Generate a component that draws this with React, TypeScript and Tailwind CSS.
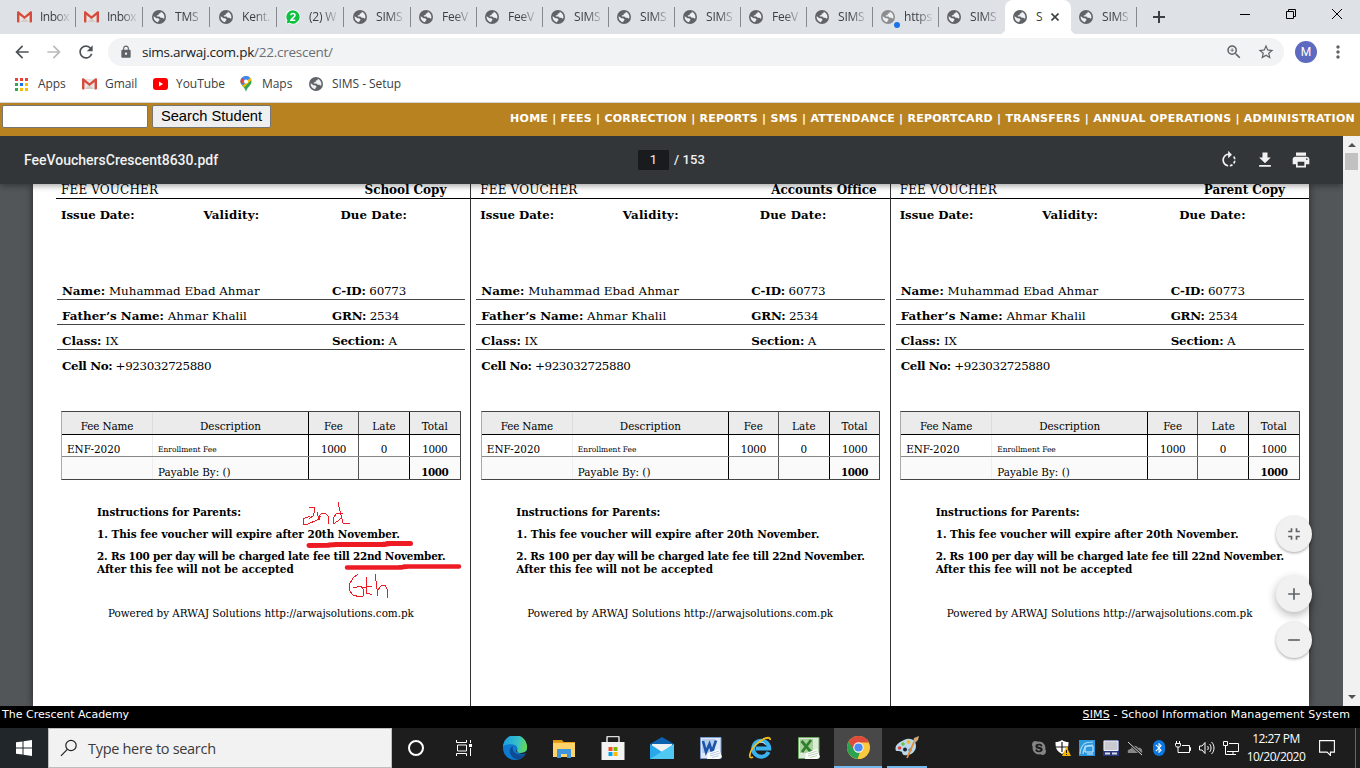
import type { ReactNode } from 'react';
import { MdArrowBack, MdArrowForward, MdRefresh, MdLock, MdZoomIn, MdStarBorder, MdMoreVert, MdAdd, MdRotateRight, MdFileDownload, MdPrint, MdFullscreenExit, MdRemove, MdBluetooth } from 'react-icons/md';
import { FaSkype } from 'react-icons/fa';

const serif = "font-['DejaVu_Serif',serif]";

function GmailIcon() {
  return (
    <svg viewBox="0 0 15 12" className="h-3 w-[15px] shrink-0">
      <path d="M1 1h13v10H1z" fill="#e8e4e2" />
      <path d="M3 11L7.5 7 12 11z" fill="#d3cdca" />
      <path d="M0 1.2C0 .3 1.2-.1 1.9.5L7.500 5.200 13.100.5C13.800-.1 15 .3 15 1.200V10.500a1 1 0 0 1-1 1h-1.400V4L7.500 8 2.400 4v7.500H1a1 1 0 0 1-1-1z" fill="#d54b3d" />
    </svg>
  );
}

function WhatsAppIcon() {
  return (
    <svg viewBox="0 0 16 16" className="size-4 shrink-0">
      <path d="M8 .5a7.500 7.500 0 1 1-3.600 14.100L.5 15.600l1-3.800A7.500 7.500 0 0 1 8 .5z" fill="#fff" />
      <path d="M8 1.300a6.700 6.700 0 1 1-3.400 12.500l-3 .8.800-3A6.700 6.700 0 0 1 8 1.300z" fill="#0fc143" />
      <path d="M5.800 6.200C6 4 10 4 10 6.300 10 8 6.500 9.500 5.900 11.300H10.300" fill="none" stroke="#fff" strokeWidth="1.500" />
    </svg>
  );
}

function Globe({ light = false }: { light?: boolean }) {
  return (
    <svg viewBox="0 0 14 14" className="size-[14px] shrink-0">
      <circle cx="7" cy="7" r="7" fill={light ? '#8a8d90' : '#5f6368'} />
      <path d="M8.600 1.700c2.200.7 3.800 2.800 3.800 5.300 0 .6-.1 1.100-.3 1.700-.7-.5-1.400-.4-1.800-1H8.800C8 7.700 8 6.500 7.200 6.500H4.800V5.200h1.300c.5 0 .6-.3.6-.7V3.400h1c.7 0 1.200-.5.9-1.700z" fill="#eef0f2" />
      <path d="M1.700 6.300L4.500 8.300h1.700l1.300 1.200c0 .9-.5 1.200-1.200 1.600v1.200C3.700 12 1.600 9.800 1.600 7z" fill="#eef0f2" />
    </svg>
  );
}

type TabInfo = { title: string; icon?: 'gmail' | 'wa' | 'busy'; active?: boolean; noLine?: boolean };

const tabs: TabInfo[] = [
  { title: 'Inbox', icon: 'gmail' },
  { title: 'Inbox', icon: 'gmail' },
  { title: 'TMS' },
  { title: 'Kent.' },
  { title: '(2) W', icon: 'wa' },
  { title: 'SIMS' },
  { title: 'FeeV' },
  { title: 'FeeV' },
  { title: 'SIMS' },
  { title: 'SIMS' },
  { title: 'SIMS' },
  { title: 'FeeV' },
  { title: 'SIMS' },
  { title: 'https', icon: 'busy' },
  { title: 'SIMS', noLine: true },
  { title: 'S', active: true, noLine: true },
  { title: 'SIMS' },
];

function Tab({ tab, wide }: { tab: TabInfo; wide: boolean }) {
  return (
    <div className={'relative flex h-full shrink-0 items-center ' + (wide ? 'w-[67px] pl-2 ' : 'w-[66px] pl-[7px] ') + (tab.active ? 'rounded-t-lg bg-white' : '')}>
      <div className="relative flex w-[15px] shrink-0 justify-center">
        {tab.icon === 'gmail' ? <GmailIcon /> : tab.icon === 'wa' ? <WhatsAppIcon /> : <Globe light={tab.icon === 'busy'} />}
        {tab.icon === 'busy' && <span className="absolute -right-[5px] -bottom-1 size-1.5 rounded-full bg-[#1a73e8]" />}
      </div>
      {tab.active ? (
        <>
          <span className="ml-[9px]">{tab.title}</span>
          <svg viewBox="0 0 8 8" className="ml-2 size-2" fill="none" stroke="#3c4043" strokeWidth="1.600"><path d="M.5.5l7 7M7.500.5l-7 7" /></svg>
          <span className="absolute bottom-0 -left-1.5 h-1.5 w-1.5 bg-[radial-gradient(circle_at_0_0,transparent_6px,white_6.500px)]" />
          <span className="absolute -right-1.5 bottom-0 h-1.5 w-1.5 bg-[radial-gradient(circle_at_100%_0,transparent_6px,white_6.500px)]" />
        </>
      ) : (
        <span className={'overflow-hidden whitespace-nowrap [mask-image:linear-gradient(to_right,black_45%,rgba(0,0,0,0.2)_27px)] ' + (tab.icon === 'gmail' ? 'ml-2 w-[34px] tracking-[-0.500px]' : 'ml-[9px] w-7 tracking-[-0.2px]')}>{tab.title}</span>
      )}
      {!tab.noLine && <span className="absolute top-[7px] right-0 h-5 w-px bg-[#85888c]" />}
    </div>
  );
}

function BrowserChrome() {
  return (
    <div className="font-['Open_Sans',sans-serif] text-[12px] text-[#3c4043]">
      <div className="flex h-[34px] bg-[#dee1e6] pl-[9px]">
        <div className="flex w-[1128px]">
          {tabs.map((t, i) => <Tab key={i} tab={t} wide={i < 6} />)}
        </div>
        <div className="flex w-11 items-center justify-center">
          <svg viewBox="0 0 12 12" className="size-3" fill="none" stroke="#3c4043" strokeWidth="2"><path d="M6 0v12M0 6h12" /></svg>
        </div>
        <svg viewBox="0 0 120 34" className="ml-auto h-[34px] w-[120px]" fill="none" stroke="#000" strokeWidth="1">
          <path d="M0 14.500h10M46.500 11.500h7v7h-7zM48.500 11.500v-2h7v7h-2M92 9l10 10M102 9l-10 10" />
        </svg>
      </div>
      <div className="flex h-9 items-center bg-white">
        <MdArrowBack className="ml-3 size-5 text-[#4f5357]" />
        <MdArrowForward className="ml-3 size-5 text-[#b9bbbd]" />
        <MdRefresh className="ml-3 size-5 text-[#4f5357]" />
        <div className="ml-[12px] flex h-7 w-[1176px] items-center rounded-full bg-[#f1f3f4] pl-[11px]">
          <MdLock className="size-[14px] text-[#5f6368]" />
          <span className="ml-[9px] text-[13.500px] leading-5 tracking-[-0.250px] text-[#202124]">sims.arwaj.com.pk<span className="text-[#6b6f74]">/22.crescent/</span></span>
          <MdZoomIn className="mr-[14px] ml-auto size-[18px] text-[#5f6368]" />
          <MdStarBorder className="mr-[9px] size-[18px] text-[#5f6368]" />
        </div>
        <div className="ml-[11px] flex size-[22px] items-center justify-center rounded-full bg-[#5c6bc0] font-[Roboto,sans-serif] text-[12px] text-white">M</div>
        <MdMoreVert className="ml-[11px] size-5 text-[#5f6368]" />
      </div>
      <div className="flex h-[33px] items-center border-b border-[#d3d6d9] bg-white pb-1 pl-[15px] text-[12px] tracking-[-0.050px]">
        <div className="grid grid-cols-3 gap-[2px]">
          <i className="size-[3px] bg-[#ea4335]" /><i className="size-[3px] bg-[#ea4335]" /><i className="size-[3px] bg-[#ea4335]" />
          <i className="size-[3px] bg-[#34a853]" /><i className="size-[3px] bg-[#1a73e8]" /><i className="size-[3px] bg-[#fbbc04]" />
          <i className="size-[3px] bg-[#34a853]" /><i className="size-[3px] bg-[#fbbc04]" /><i className="size-[3px] bg-[#fbbc04]" />
        </div>
        <span className="ml-[10px] w-[44px]">Apps</span>
        <GmailIcon />
        <span className="ml-2 w-[48px]">Gmail</span>
        <svg viewBox="0 0 15 12" className="h-3 w-[15px]"><rect width="15" height="12" rx="3" fill="#f00" /><path d="M6 3.500v5L10 6z" fill="#fff" /></svg>
        <span className="ml-2 w-[64px]">YouTube</span>
        <svg viewBox="0 0 12 16" className="h-4 w-3">
          <path d="M6 0a5.500 5.500 0 0 1 5.500 5.500C11.500 9.500 7 11 6 16 5 11 .5 9.500.5 5.500A5.500 5.500 0 0 1 6 0z" fill="#34a853" />
          <path d="M.5 5.500C.5 8.500 2.500 9.800 4 11.500L11.300 4C11 2 9.500.7 8.500.4z" fill="#fbbc04" />
          <path d="M6 0C7.500 0 9 .5 10 1.700L3.200 9.600C1.600 8.300.5 7 .5 5.500A5.500 5.500 0 0 1 6 0z" fill="#4285f4" />
          <path d="M1.700 2.100L4.700 4.800 1.600 8.200A5.500 5.500 0 0 1 1.700 2.100z" fill="#ea4335" />
          <circle cx="6" cy="5.500" r="2.100" fill="#fff" />
        </svg>
        <span className="ml-[10px] w-[47px]">Maps</span>
        <Globe />
        <span className="ml-[9px]">SIMS - Setup</span>
      </div>
    </div>
  );
}

function SiteHeader() {
  return (
    <div className="flex h-[33px] items-start bg-[#b98221]">
      <div className="mt-[2px] ml-[2px] h-[23px] w-[146px] rounded-[2px] border border-[#767676] bg-white" />
      <button className="mt-[2px] ml-1 h-[23px] w-[119px] rounded-[2px] border border-[#767676] bg-[#efefef] pb-px font-['Liberation_Sans',sans-serif] text-[14.700px] leading-5 text-black">Search Student</button>
      <nav className="mt-2 mr-[5px] ml-auto font-['DejaVu_Sans',sans-serif] text-[11px] leading-4 font-bold tracking-[0.250px] whitespace-nowrap text-white">
        HOME | FEES | CORRECTION | REPORTS | SMS | ATTENDANCE | REPORTCARD | TRANSFERS | ANNUAL OPERATIONS | ADMINISTRATION
      </nav>
    </div>
  );
}

function PdfToolbar() {
  return (
    <div className="relative z-10 flex h-12 shrink-0 items-center bg-[#323639] font-[Roboto,sans-serif] text-[#f1f1f1] shadow-[0_2px_6px_rgba(0,0,0,0.35)]">
      <span className="w-[638px] pl-6 text-[14px] font-medium">FeeVouchersCrescent8630.pdf</span>
      <span className="flex h-5 w-[31px] items-center justify-center bg-[#191b1c] text-[13px]">1</span>
      <span className="ml-[5px] text-[13px] font-medium tracking-[0.1px]">/ 153</span>
      <MdRotateRight className="ml-auto size-5" />
      <MdFileDownload className="ml-[16px] size-5" />
      <MdPrint className="mr-[32px] ml-4 size-5" />
    </div>
  );
}

function Detail({ a, av, b, bv, last = false }: { a: string; av: string; b?: string; bv?: string; last?: boolean }) {
  return (
    <div className={last ? 'flex h-[25px] pt-2 pl-[5px] leading-4' : 'flex h-[25px] border-b border-[#444] pt-2 pl-[5px] leading-4'}>
      <span className={last ? 'w-[270px] tracking-[-0.400px]' : 'w-[270px]'}><b>{a}</b> {av}</span>
      {b && <span className="tracking-[-0.200px]"><b>{b}</b> {bv}</span>}
    </div>
  );
}

function Cell({ children, className }: { children?: ReactNode; className: string }) {
  return <div className={'leading-4 ' + className}>{children}</div>;
}

function Voucher({ copy, pad, first = false }: { copy: string; pad: string; first?: boolean }) {
  return (
    <div className={first ? 'min-w-0 pl-px' : 'min-w-0 border-l border-[#333]'}>
      <div className={'flex h-[15px] justify-between border-b border-black text-[12px] leading-[13px] ' + pad}>
        <span className="tracking-[0.150px]">FEE VOUCHER</span><b className="tracking-[-0.050px]">{copy}</b>
      </div>
      <div className="flex h-[76px] pt-2 pl-[9px] text-[11.800px] leading-4 font-bold">
        <span className="w-[142.500px] tracking-[-0.050px]">Issue Date:</span><span className="w-[137px] tracking-[0.200px]">Validity:</span><span className="tracking-[0.100px]">Due Date:</span>
      </div>
      <div className="mr-[5px] ml-[5px] text-[11.900px]">
        <Detail a="Name:" av="Muhammad Ebad Ahmar" b="C-ID:" bv="60773" />
        <Detail a="Father’s Name:" av="Ahmar Khalil" b="GRN:" bv="2534" />
        <Detail a="Class:" av="IX" b="Section:" bv="A" />
        <Detail a="Cell No:" av="+923032725880" last />
      </div>
      <div className={'mt-9 h-[69px] w-[399.500px] border border-[#444] border-l-[#aaa] text-[10.400px] ' + (first ? 'ml-[9px]' : 'ml-[9.500px]')}>
        <div className="flex h-[23px] border-b border-black bg-[#ebebeb] text-center">
          <Cell className="w-[91px] border-r border-[#ddd] pt-1.5 tracking-[-0.150px]">Fee Name</Cell>
          <Cell className="w-[156px] border-r border-black pt-1.5">Description</Cell>
          <Cell className="w-[50px] border-r border-[#555] pt-1.5">Fee</Cell>
          <Cell className="w-[51px] border-r border-black pt-1.5">Late</Cell>
          <Cell className="flex-1 pt-1.5">Total</Cell>
        </div>
        <div className="flex h-[22px] border-b border-[#888] text-center">
          <Cell className="w-[91px] border-r border-[#eee] pt-1.5 pl-[5px] text-left">ENF-2020</Cell>
          <Cell className="w-[156px] border-r border-black pt-[7px] pl-[5px] text-left text-[7.500px]">Enrollment Fee</Cell>
          <Cell className="w-[50px] border-r border-[#555] pt-1.5 tracking-[-0.300px]">1000</Cell>
          <Cell className="w-[51px] border-r border-black pt-1.5">0</Cell>
          <Cell className="flex-1 pt-1.5 tracking-[-0.300px]">1000</Cell>
        </div>
        <div className="flex h-[22px] bg-[#fafafa] text-center">
          <Cell className="w-[91px] border-r border-[#eee]" />
          <Cell className="w-[156px] border-r border-black pt-[7px] pl-[5px] text-left">Payable By: ()</Cell>
          <Cell className="w-[50px] border-r border-[#555]" />
          <Cell className="w-[51px] border-r border-black" />
          <Cell className="flex-1 pt-[7px] font-bold tracking-[-0.500px]">1000</Cell>
        </div>
      </div>
      <div className="mt-[26px] pl-[45px] text-[10.400px] leading-[13px] font-bold whitespace-nowrap">
        <p>Instructions for Parents:</p>
        <p className="mt-[9px]">1. This fee voucher will expire after 20th November.</p>
        <p className="mt-[9px] tracking-[-0.180px]">2. Rs 100 per day will be charged late fee till 22nd November.</p>
        <p>After this fee will not be accepted</p>
      </div>
      <p className="mt-[31px] pl-[56px] text-[10.400px] leading-[13px] tracking-[-0.040px] whitespace-nowrap">Powered by ARWAJ Solutions http://arwajsolutions.com.pk</p>
    </div>
  );
}

function Annotations() {
  return (
    <svg viewBox="0 0 170 110" className="absolute top-[360px] left-[295px] h-[110px] w-[170px]" fill="none" stroke="#ed1c24" strokeLinecap="round" strokeLinejoin="round">
      <path strokeWidth="1" shapeRendering="crispEdges" d="M14 11h5l1 3-2 6-4 3M15 20l-7 3v5h5l9-4 4-4M22 16l2 8v-4l3-3h3l3 3 1 8M48 17h-6l-4 5v6l5-3 3-3M43 6l2 9 3 12 7 1" />
      <path strokeWidth="5" d="M14 49.500l20-.2M40 48.500h50M92 47.500h23.500M34 49l8-.5M88 48.200l6-.5" />
      <path strokeWidth="4.500" d="M52 71.500h55M109 70.500h55M104 71.300l8-.6" />
      <path strokeWidth="1" shapeRendering="crispEdges" d="M63 78l-5 4-4 7v5l4 5 7 2 3-1v-7l-2-3-8 2M71 81v16l4 1h2M67 92l10-2M80 78l3 22M83 94l3-4 4-1 2 4 1 9" />
    </svg>
  );
}

function Fab({ children, lifted = false }: { children: ReactNode; lifted?: boolean }) {
  return <div className={lifted ? 'flex size-9 items-center justify-center rounded-full bg-[#f1f1f1] text-[#5f6368] shadow-[0_3px_10px_rgba(0,0,0,0.3)]' : 'flex size-9 items-center justify-center rounded-full bg-[#f1f1f1] text-[#5f6368] shadow-[0_1px_3px_rgba(0,0,0,0.35)]'}>{children}</div>;
}

function PdfViewer() {
  return (
    <div className="flex h-[570px]">
      <div className="relative flex w-[1343px] flex-col overflow-hidden bg-[#525659]">
        <PdfToolbar />
        <div className={'ml-[33px] grid w-[1276px] flex-1 grid-cols-3 bg-white pl-[18px] text-black shadow-[0_0_8px_rgba(0,0,0,0.55)] ' + serif}>
          <Voucher copy="School Copy" pad="ml-1 pr-6 pl-[5px]" first />
          <Voucher copy="Accounts Office" pad="pr-[13px] pl-[9px]" />
          <Voucher copy="Parent Copy" pad="pr-6 pl-[9px]" />
        </div>
        <Annotations />
        <div className="absolute top-[380px] right-[31px] flex flex-col">
          <Fab><MdFullscreenExit className="size-5" /></Fab>
          <div className="mt-6"><Fab lifted><MdAdd className="size-5" /></Fab></div>
          <div className="mt-[10px]"><Fab><MdRemove className="size-5" /></Fab></div>
        </div>
      </div>
      <div className="flex w-[17px] flex-col items-center justify-between bg-[#f1f1f1] pb-[7px]">
        <div className="flex flex-col items-center pt-[7px]">
          <svg viewBox="0 0 8 4" className="h-1 w-2"><path d="M0 4L4 0l4 4z" fill="#505050" /></svg>
          <div className="mt-[6px] h-[17px] w-[13px] bg-[#c1c1c1]" />
        </div>
        <svg viewBox="0 0 8 4" className="h-1 w-2"><path d="M0 0l4 4 4-4z" fill="#505050" /></svg>
      </div>
    </div>
  );
}

function TaskIcon({ children }: { children: ReactNode }) {
  return <div className="flex h-full w-[49px] items-center justify-center">{children}</div>;
}

function Doc({ kind }: { kind: 'word' | 'excel' }) {
  const w = kind === 'word';
  return (
    <svg viewBox="0 0 22 22" className="size-[22px]">
      <path d="M.5 .5h20.500v21H.5z" fill={w ? '#dfe8f6' : '#dcebd8'} stroke={w ? '#7b9bd0' : '#6fa765'} />
      <path d="M2 2h13v14H2z" fill={w ? '#b8cdec' : '#a8cf9c'} />
      {w ? <path d="M3 4l3 11 3.500-8 2.500 8L16 3.500" fill="none" stroke="#1c55a8" strokeWidth="2.600" /> : <path d="M3.500 4L13 15M13 3L4 15" fill="none" stroke="#2f7f2c" strokeWidth="2.800" />}
      <path d="M8 16l11-4 3 8-3 2H7z" fill="#fff" />
      <path d="M10 17l9-3M10 19l10-3M12 20.500l7-2" stroke={w ? '#9bb3d8' : '#9cc494'} strokeWidth=".7" />
    </svg>
  );
}

function Taskbar() {
  return (
    <div className="flex h-10 bg-[#1d1d1d] font-['Open_Sans',sans-serif] text-white">
      <div className="flex w-12 items-center justify-center bg-[#20262a]">
        <svg viewBox="0 0 16 16" className="size-4" fill="#fff"><path d="M0 2.300L6.500 1.400V7.500H0zM7.500 1.200L16 0v7.500H7.500zM0 8.500h6.500v6.100L0 13.700zM7.500 8.500H16V16l-8.500-1.200z" /></svg>
      </div>
      <div className="flex w-[344px] items-center border border-[#bdbdbd] bg-[#f2f2f2] pl-[11px]">
        <svg viewBox="0 0 18 18" className="size-[18px]" fill="none" stroke="#222" strokeWidth="1.200"><circle cx="11" cy="6.500" r="5.200" /><path d="M7.300 10.300L1 16.800" /></svg>
        <span className="ml-[10px] pt-px text-[14.500px] tracking-[-0.300px] text-[#3b3b3b]">Type here to search</span>
      </div>
      <div className="flex w-12 items-center justify-center"><span className="size-4 rounded-full border-2 border-white" /></div>
      <div className="flex w-[50px] items-center justify-center pr-[3px]">
        <svg viewBox="0 0 16 16" className="size-4" fill="none" stroke="#fff"><path d="M.5 0v2.500h10V0M1.500 5h9v6h-9zM.5 16v-2.500h10V16M14.500 0v3M14.500 8v8" /><path d="M13 4h3v3h-3z" fill="#fff" stroke="none" /></svg>
      </div>
      <TaskIcon>
        <svg viewBox="0 0 24 24" className="size-6">
          <defs><linearGradient id="eg" x1="0" x2="1" y1="0.300" y2="0.500"><stop stopColor="#1b9de2" /><stop offset=".6" stopColor="#35c1c8" /><stop offset="1" stopColor="#66d84f" /></linearGradient></defs>
          <circle cx="12" cy="12" r="12" fill="#0d79d1" />
          <path d="M0 11A12 12 0 0 1 24 11c.3 4.500-3 6-6 6-3 0-5-1-4-2.500C15.500 12.500 14 8.500 9.500 8.500 5 8 1 9 0 11z" fill="url(#eg)" />
          <path d="M8 11.500C5 15 8 22.500 14 23.500c4-.5 7-3 8.500-6-2 1-5 1.500-8 .5-3-1-6-3.500-4.500-8z" fill="#0d4c94" />
          <path d="M13.500 13.500c-1 1.500 0 3.500 4.500 3.500 2.500 0 4.500-1 5.500-2.500v2.500c-4 2-9 1.500-10-3.500z" fill="#1d1d1d" />
        </svg>
      </TaskIcon>
      <TaskIcon>
        <svg viewBox="0 0 22 19" className="h-[19px] w-[22px]"><path d="M0 1h9l1.500 2H22v15H0z" fill="#e9a21a" /><path d="M0 4h22v14H0z" fill="#fdd36a" /><path d="M4 10h14v9h-4v-4H8v4H4z" fill="#3f96dd" /><path d="M0 1h9v1.500H0z" fill="#d9920a" /></svg>
      </TaskIcon>
      <TaskIcon>
        <svg viewBox="0 0 24 24" className="size-6"><path d="M6 7V1.500a1 1 0 0 1 1-1h10a1 1 0 0 1 1 1V7" fill="none" stroke="#ddd" strokeWidth="1.500" /><path d="M.5 6h23v18H.5z" fill="#f3f3f3" /><path d="M7.500 11h4v4h-4z" fill="#f25022" /><path d="M12.500 11h4v4h-4z" fill="#7fba00" /><path d="M7.500 16h4v4h-4z" fill="#00a4ef" /><path d="M12.500 16h4v4h-4z" fill="#ffb900" /></svg>
      </TaskIcon>
      <TaskIcon>
        <svg viewBox="0 0 24 22" className="h-[22px] w-6"><path d="M0 7L12 0l12 7v15H0z" fill="#0b62ae" /><path d="M2 7h20v8l-10 4L2 15z" fill="#eef2f5" /><path d="M0 7l12 8 12-8v15H0z" fill="#28a8ea" /><path d="M0 22L24 7v15z" fill="#50c8f4" /></svg>
      </TaskIcon>
      <TaskIcon><Doc kind="word" /></TaskIcon>
      <TaskIcon>
        <svg viewBox="0 0 24 24" className="size-6" fill="none">
          <path d="M20.500 16a8 8 0 1 1 .7-3.500H8" stroke="#3ab3ee" strokeWidth="4" />
          <path d="M17.500 8.500A6 6 0 0 0 7 10" stroke="#b4e6fb" strokeWidth="1" />
          <path d="M5 21C0 24 1 16 7 9.500 13 3 23-1 22 4" stroke="#f1bc1c" strokeWidth="1.800" />
        </svg>
      </TaskIcon>
      <TaskIcon><Doc kind="excel" /></TaskIcon>
      <div className="ml-px flex w-12 items-center justify-center border-b-2 border-[#76b9ed] bg-[#484848]">
        <svg viewBox="0 0 24 24" className="mt-px size-[23px]">
          <circle cx="12" cy="12" r="12" fill="#fbc93d" />
          <path d="M1.600 6A12 12 0 0 1 22.400 6L22.800 6.800H12A5.200 5.200 0 0 0 7 10.500L6.800 14.600z" fill="#de4a3c" />
          <path d="M1.600 6L7.500 14.600A5.200 5.200 0 0 0 13.500 17L11 24A12 12 0 0 1 1.600 6z" fill="#2aa24f" />
          <circle cx="12" cy="12" r="5.400" fill="#f4f4f4" /><circle cx="12" cy="12" r="4.300" fill="#4c8bf5" />
        </svg>
      </div>
      <div className="ml-[5px] flex w-10 items-center justify-center border-b-2 border-[#76b9ed]">
        <svg viewBox="0 0 24 24" className="size-6">
          <path d="M9 5c6-3 12 0 12 6 0 7-7 10-12 9-2 0-1-3-3-3.500C3 16 0 17 .5 13 1 9 5 7 9 5z" fill="#b9d9ea" />
          <circle cx="10" cy="14.500" r="2" fill="#222" /><circle cx="4.500" cy="13" r="1.800" fill="#e2453b" /><circle cx="8" cy="9" r="1.800" fill="#6cc046" /><circle cx="13.500" cy="7" r="2" fill="#f2b92f" /><circle cx="15" cy="15" r="1.800" fill="#4d88d8" />
          <path d="M12 23l7-16" stroke="#e58a2e" strokeWidth="1.800" /><path d="M18 7l1-4 5-2-1 4-3 3z" fill="#cfa77c" />
        </svg>
      </div>
      <div className="ml-auto flex items-center gap-2">
        <FaSkype className="size-4 text-[#858585]" />
        <svg viewBox="0 0 16 16" className="size-4"><path d="M7 0c2 1.500 4 2 6.500 2 0 6-1 9-6.500 12C1.500 11 .5 8 .5 2 3 2 5 1.500 7 0z" fill="#fff" /><path d="M7 2v10M1 7h12" stroke="#1d1d1d" strokeWidth="1.200" /><path d="M11.500 6.500L16 16H7z" fill="#f7b500" /><path d="M11.500 10v3M11.500 14v1" stroke="#222" /></svg>
        <svg viewBox="0 0 16 16" className="size-4"><path d="M0 0h16v16H0z" fill="#2b97dd" /><path d="M1 14C2 3 7 2 14 2M4 14c0-6 4-9 10-9" fill="none" stroke="#a5d9f6" strokeWidth="1.200" /><path d="M6 6h8v6H6zM8 14h6" fill="none" stroke="#d7f0ff" /></svg>
        <svg viewBox="0 0 16 16" className="size-4"><path d="M0 0h16v16H0z" fill="#28367d" /><path d="M1 1h14v9.500H1z" fill="#c9c9d0" stroke="#f1f1f5" /><path d="M2 12.500h5v2H2zM9 12.500h5v2H9z" fill="#dbdbe3" /></svg>
        <svg viewBox="0 0 16 16" className="size-4"><path d="M1 13C0 10 2 9 4 9c0-4 6-4 7-1 3-1 5 2 4 5z" fill="#888" /><path d="M1 2l14 13" stroke="#1d1d1d" strokeWidth="2.500" /><path d="M1 2l14 13" stroke="#ddd" strokeWidth="1" /></svg>
        <span className="flex h-4 w-4 items-center justify-center"><span className="flex h-4 w-3 items-center justify-center rounded-full bg-[#0a78e0]"><MdBluetooth className="size-3" /></span></span>
        <svg viewBox="0 0 16 16" className="size-4" fill="none" stroke="#fff"><path d="M7 5.500h7.500v7H6M14.500 7.500h1v3h-1M1.500 1v2M4.500 1v2M.5 3.500h5v2l-1 1.500h-3l-1-1.500zM3 7v5.500h3" /></svg>
        <svg viewBox="0 0 16 16" className="size-4" fill="none" stroke="#fff"><path d="M.5 6h2.500l3-3.500v11L3 10H.500zM8.500 6c1 1 1 3 0 4M10.500 4c2 2 2 6 0 8M12.500 2c3.300 3 3.300 9 0 12" /></svg>
        <svg viewBox="0 0 16 16" className="size-4" fill="none" stroke="#fff"><path d="M6 3.500h9.500v8H4M10 11.500v3M5 14.500h8M.5 1.500h4v4h-4zM2.500 5.500v9h2.500" /></svg>
      </div>
      <div className="ml-[6px] flex w-[62px] flex-col items-center justify-center text-[12px] leading-[18px] tracking-[-0.500px]"><span>12:27 PM</span><span>10/20/2020</span></div>
      <svg viewBox="0 0 16 16" className="mt-3 ml-3 size-4" fill="none" stroke="#fff" strokeWidth="1.100"><path d="M.6.6h14.800v11.500h-4v3.300l-3.300-3.300H.6z" /></svg>
      <div className="mr-1 ml-5 w-px bg-[#666]" />
    </div>
  );
}

export default function App() {
  return (
    <div className="h-[768px] w-[1360px] overflow-hidden bg-white">
      <BrowserChrome />
      <SiteHeader />
      <PdfViewer />
      <footer className="flex h-[22px] justify-between bg-black pt-px pr-[10px] pl-[2px] font-['DejaVu_Sans',sans-serif] text-[11px] leading-4 text-white">
        <span>The Crescent Academy</span>
        <span className="tracking-[0.130px]"><u>SIMS</u> - School Information Management System</span>
      </footer>
      <Taskbar />
    </div>
  );
}
